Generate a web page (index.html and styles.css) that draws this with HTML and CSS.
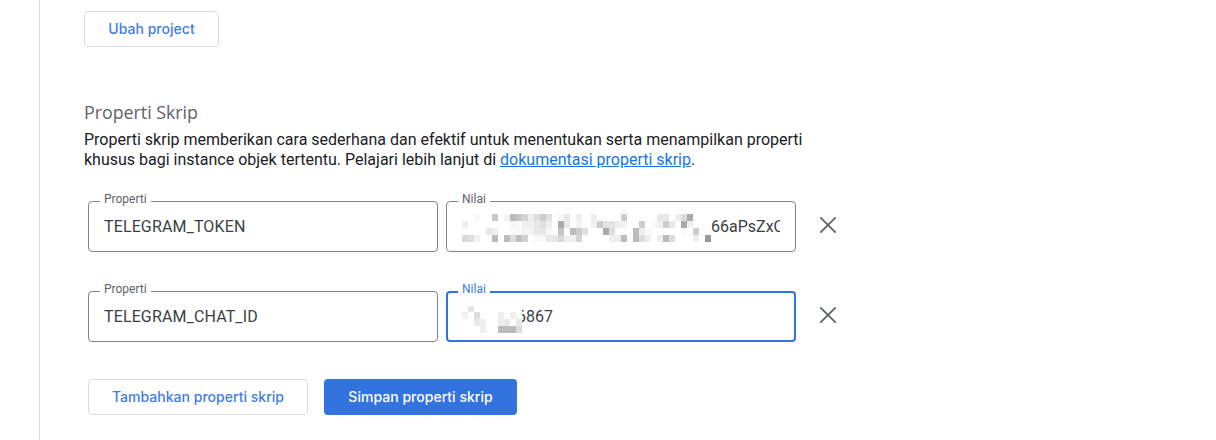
FILE: index.html
```html
<!DOCTYPE html>
<html lang="id">
<head>
<meta charset="utf-8">
<title>Properti Skrip</title>
<link rel="stylesheet" href="styles.css">
</head>
<body>
<div class="rail"></div>
<main class="main">
  <button class="btn btn-outline btn-project">Ubah project</button>
  <h2 class="title">Properti Skrip</h2>
  <p class="desc">Properti skrip memberikan cara sederhana dan efektif untuk menentukan serta menampilkan properti<br>khusus bagi instance objek tertentu. Pelajari lebih lanjut di <a href="#">dokumentasi properti skrip</a>.</p>
  <div class="rows">
    <div class="row">
      <fieldset class="field"><legend>Properti</legend><span class="val">TELEGRAM_TOKEN</span></fieldset>
      <fieldset class="field"><legend>Nilai</legend>
        <svg class="mosaic mosaic-a" width="249" height="28" viewBox="0 0 249 28" shape-rendering="crispEdges" aria-hidden="true">
          <g>
            <rect x="12" y="0" width="6" height="7" fill="#f8f8f8"/><rect x="30" y="0" width="6" height="7" fill="#c8c8c8"/><rect x="42" y="0" width="6" height="7" fill="#f4f4f4"/><rect x="48" y="0" width="6" height="7" fill="#bbb"/><rect x="54" y="0" width="6" height="7" fill="#c8c8c8"/><rect x="60" y="0" width="6" height="7" fill="#d4d4d4"/><rect x="66" y="0" width="6" height="7" fill="#eee"/><rect x="72" y="0" width="6" height="7" fill="#ddd"/><rect x="78" y="0" width="6" height="7" fill="#ccc"/><rect x="84" y="0" width="6" height="7" fill="#e0e0e0"/><rect x="96" y="0" width="6" height="7" fill="#f8f8f8"/><rect x="102" y="0" width="6" height="7" fill="#e8e8e8"/><rect x="114" y="0" width="6" height="7" fill="#eee"/>
            <rect x="0" y="7" width="6" height="7" fill="#eee"/><rect x="48" y="7" width="6" height="7" fill="#f5f5f5"/><rect x="54" y="7" width="6" height="7" fill="#fafafa"/><rect x="60" y="7" width="12" height="7" fill="#f0f0f0"/><rect x="72" y="7" width="6" height="7" fill="#e8e8e8"/><rect x="78" y="7" width="6" height="7" fill="#e0e0e0"/><rect x="84" y="7" width="6" height="7" fill="#f0f0f0"/><rect x="96" y="7" width="6" height="7" fill="#aaa"/><rect x="102" y="7" width="6" height="7" fill="#e8e8e8"/><rect x="114" y="7" width="6" height="7" fill="#f5f5f5"/>
            <rect x="24" y="14" width="6" height="7" fill="#e8e8e8"/><rect x="30" y="14" width="6" height="7" fill="#f0f0f0"/><rect x="48" y="14" width="12" height="7" fill="#fafafa"/><rect x="60" y="14" width="12" height="7" fill="#f4f4f4"/><rect x="72" y="14" width="12" height="7" fill="#e8e8e8"/><rect x="84" y="14" width="6" height="7" fill="#f8f8f8"/><rect x="96" y="14" width="6" height="7" fill="#c4c4c4"/><rect x="108" y="14" width="6" height="7" fill="#bbb"/><rect x="114" y="14" width="6" height="7" fill="#ccc"/><rect x="120" y="14" width="6" height="7" fill="#e0e0e0"/>
            <rect x="0" y="21" width="6" height="7" fill="#d8d8d8"/><rect x="6" y="21" width="6" height="7" fill="#ddd"/><rect x="12" y="21" width="6" height="7" fill="#f2f2f2"/><rect x="30" y="21" width="6" height="7" fill="#bbb"/><rect x="42" y="21" width="6" height="7" fill="#bbb"/><rect x="48" y="21" width="6" height="7" fill="#ddd"/><rect x="54" y="21" width="6" height="7" fill="#c0c0c0"/><rect x="60" y="21" width="6" height="7" fill="#d0d0d0"/><rect x="72" y="21" width="12" height="7" fill="#f8f8f8"/><rect x="84" y="21" width="12" height="7" fill="#e8e8e8"/><rect x="96" y="21" width="6" height="7" fill="#d8d8d8"/><rect x="102" y="21" width="12" height="7" fill="#f0f0f0"/><rect x="114" y="21" width="6" height="7" fill="#d4d4d4"/>
          </g>
          <g transform="translate(129 0)">
            <rect x="0" y="0" width="6" height="7" fill="#eee"/><rect x="30" y="0" width="6" height="7" fill="#ccc"/><rect x="66" y="0" width="12" height="7" fill="#e8e8e8"/><rect x="84" y="0" width="6" height="7" fill="#eee"/><rect x="90" y="0" width="6" height="7" fill="#ddd"/><rect x="96" y="0" width="6" height="7" fill="#aaa"/>
            <rect x="0" y="7" width="6" height="7" fill="#f0f0f0"/><rect x="6" y="7" width="6" height="7" fill="#ccc"/><rect x="12" y="7" width="12" height="7" fill="#e4e4e4"/><rect x="24" y="7" width="6" height="7" fill="#eee"/><rect x="30" y="7" width="6" height="7" fill="#f4f4f4"/><rect x="48" y="7" width="6" height="7" fill="#ccc"/><rect x="60" y="7" width="6" height="7" fill="#f8f8f8"/><rect x="66" y="7" width="6" height="7" fill="#f0f0f0"/><rect x="72" y="7" width="6" height="7" fill="#ccc"/><rect x="78" y="7" width="6" height="7" fill="#e8e8e8"/><rect x="90" y="7" width="6" height="7" fill="#aaa"/><rect x="96" y="7" width="6" height="7" fill="#f0f0f0"/>
            <rect x="12" y="14" width="6" height="7" fill="#aaa"/><rect x="18" y="14" width="6" height="7" fill="#ddd"/><rect x="42" y="14" width="6" height="7" fill="#bbb"/><rect x="48" y="14" width="6" height="7" fill="#eee"/><rect x="54" y="14" width="6" height="7" fill="#f8f8f8"/><rect x="90" y="14" width="6" height="7" fill="#fafafa"/><rect x="102" y="14" width="6" height="7" fill="#ccc"/>
            <rect x="18" y="21" width="12" height="7" fill="#eee"/><rect x="30" y="21" width="6" height="7" fill="#bbb"/><rect x="42" y="21" width="6" height="7" fill="#bbb"/><rect x="48" y="21" width="6" height="7" fill="#ddd"/><rect x="54" y="21" width="6" height="7" fill="#eee"/><rect x="66" y="21" width="6" height="7" fill="#eee"/><rect x="72" y="21" width="6" height="7" fill="#bbb"/><rect x="78" y="21" width="6" height="7" fill="#ddd"/><rect x="102" y="21" width="6" height="7" fill="#eee"/><rect x="114" y="21" width="6" height="7" fill="#999"/>
          </g>
        </svg>
        <span class="val val-clip">66aPsZxC</span>
      </fieldset>
      <button class="close" aria-label="Hapus"><svg width="28" height="28" viewBox="0 0 28 28"><path d="M6.3 6.3 21.7 21.7M21.7 6.3 6.3 21.7"/></svg></button>
    </div>
    <div class="row">
      <fieldset class="field"><legend>Properti</legend><span class="val">TELEGRAM_CHAT_ID</span></fieldset>
      <fieldset class="field field-focus"><legend>Nilai</legend>
        <span class="val val-num">6867</span>
        <svg class="mosaic mosaic-b" width="60" height="28" viewBox="0 0 60 28" shape-rendering="crispEdges" aria-hidden="true">
          <rect x="56" y="0" width="4" height="27" fill="#fff"/>
          <rect x="6" y="0" width="6" height="6" fill="#e4e4e4"/>
          <rect x="0" y="6" width="6" height="7" fill="#f0f0f0"/><rect x="12" y="6" width="6" height="7" fill="#ddd"/><rect x="36" y="6" width="6" height="7" fill="#eee"/><rect x="48" y="6" width="6" height="7" fill="#eee"/>
          <rect x="12" y="13" width="6" height="7" fill="#e8e8e8"/><rect x="18" y="13" width="6" height="7" fill="#eee"/><rect x="36" y="13" width="6" height="7" fill="#eee"/><rect x="42" y="13" width="6" height="7" fill="#e8e8e8"/><rect x="54" y="13" width="6" height="7" fill="#e8e8e8"/>
          <rect x="18" y="20" width="6" height="7" fill="#f0f0f0"/><rect x="36" y="20" width="18" height="7" fill="#bbb"/><rect x="54" y="20" width="6" height="7" fill="#ddd"/>
        </svg>
      </fieldset>
      <button class="close" aria-label="Hapus"><svg width="28" height="28" viewBox="0 0 28 28"><path d="M6.3 6.3 21.7 21.7M21.7 6.3 6.3 21.7"/></svg></button>
    </div>
  </div>
  <div class="actions">
    <button class="btn btn-outline btn-add">Tambahkan properti skrip</button>
    <button class="btn btn-primary btn-save">Simpan properti skrip</button>
  </div>
</main>
</body>
</html>
```
FILE: styles.css
```css
* { box-sizing: border-box; }
html, body { margin: 0; height: 440px; overflow: hidden; background: #fff; }
body { display: flex; font-family: Roboto, "Liberation Sans", sans-serif; color: #202124; }
.rail { width: 40px; height: 440px; flex: none; border-right: 1px solid #dadce0; }
.main { flex: 1; padding: 11px 0 0 44px; min-width: 0; }
.btn {
  display: block; height: 36px; padding: 0 0 1px; border-radius: 4px;
  font-family: Inter, Roboto, sans-serif; font-size: 14px; font-weight: 500; letter-spacing: 0.02px; cursor: pointer;
}
.btn-outline { background: #fff; border: 1px solid #dadce0; color: #3f7de8; }
.btn-primary { background: #3273e0; border: 0; color: #fff; }
.btn-project { width: 135px; }
.title { margin: 53px 0 0; font: 500 17.8px/24px "Open Sans", Roboto, sans-serif; color: #5f6368; }
.desc { margin: 6px 0 0; font-size: 16px; line-height: 20px; color: #202124; }
.desc a { color: #1a73e8; }
.rows { margin: 23px 0 0 4px; display: flex; flex-direction: column; gap: 31px; }
.row { display: flex; align-items: flex-start; gap: 8px; }
.field {
  width: 350px; height: 59px; margin: 0; padding: 0 15px 8px; min-width: 0;
  display: flex; align-items: center;
  border: 1px solid #80868b; border-radius: 4px;
}
.field legend { margin-left: -4px; padding: 0 4px 4px; font-size: 12px; line-height: 13px; color: #5f6368; }
.field-focus { border: 2px solid #3273e0; padding: 0 14px 8px; }
.field-focus legend { padding-bottom: 5px; color: #3f7de8; }
.val { font-size: 16px; line-height: 24px; letter-spacing: 0.13px; color: #3c4043; white-space: nowrap; }
.mosaic { flex: none; display: block; }
.mosaic-a { margin-top: 2px; }
.val-clip { width: 70px; overflow: hidden; letter-spacing: 0; }
.val-num { order: 2; margin-left: -5px; letter-spacing: 0; }
.mosaic-b { order: 1; margin-top: 6px; position: relative; z-index: 1; }
.close { width: 28px; height: 28px; padding: 0; margin: 18px 0 0 10px; border: 0; background: none; cursor: pointer; }
.close svg { display: block; fill: none; stroke: #5f6368; stroke-width: 1.8; }
.actions { display: flex; gap: 16px; margin: 37px 0 0 4px; }
.btn-add { width: 220px; }
.btn-save { width: 193px; }
```
